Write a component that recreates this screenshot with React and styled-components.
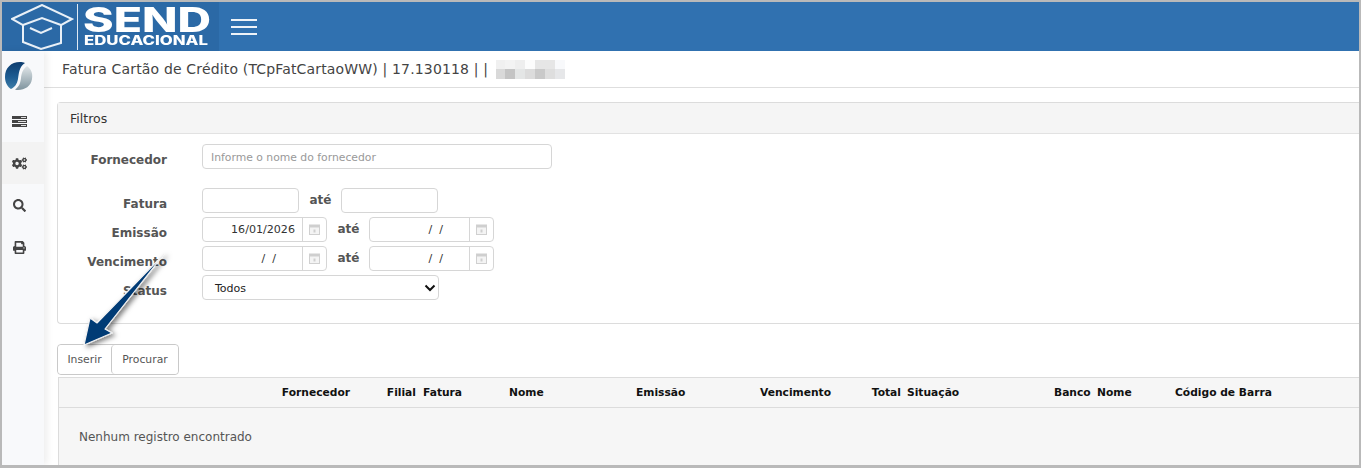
import React from 'react';
import styled, { createGlobalStyle } from 'styled-components';
import { FaCogs, FaSearch, FaPrint } from 'react-icons/fa';

const GlobalStyle = createGlobalStyle`
  html, body {
    margin: 0;
    padding: 0;
    height: 100%;
    overflow: hidden;
    background: #fff;
  }
  body {
    font-family: "DejaVu Sans", Verdana, sans-serif;
    color: #444;
  }
`;

const Page = styled.div`
  position: relative;
  box-sizing: border-box;
  width: 1361px;
  height: 468px;
  border: 2px solid #b9b9b9;
  border-bottom-width: 3px;
  display: flex;
  flex-direction: column;
  overflow: hidden;
`;

const TopBar = styled.header`
  height: 49px;
  flex: none;
  background: #3071b0;
  display: flex;
  align-items: center;
`;

const LogoBox = styled.div`
  width: 217px;
  height: 49px;
  background: #2b69a6;
  display: flex;
  align-items: center;
  padding-left: 9px;
  box-sizing: border-box;
  flex: none;
`;

const LogoDivider = styled.div`
  width: 1px;
  height: 46px;
  background: #dfe9f3;
  margin-right: 6px;
`;

const LogoWords = styled.div`
  display: flex;
  flex-direction: column;
  color: #fff;
  font-family: Inter, "Liberation Sans", sans-serif;
  width: 126px;
`;

const LogoMain = styled.span`
  font-size: 34px;
  line-height: 27px;
  font-weight: 800;
  transform: scaleX(1.365);
  transform-origin: left center;
  white-space: nowrap;
  margin-left: -1px;
`;

const LogoSub = styled.span`
  font-size: 12.5px;
  line-height: 13px;
  font-weight: 800;
  margin-top: 1px;
  transform: scaleX(1.34);
  transform-origin: left center;
  white-space: nowrap;
`;

const Burger = styled.div`
  width: 26px;
  margin-left: 12px;
  display: flex;
  flex-direction: column;
  gap: 5px;

  span {
    display: block;
    height: 2px;
    background: #eef3f8;
  }
`;

const Body = styled.div`
  flex: 1;
  display: flex;
  min-height: 0;
`;

const Sidebar = styled.aside`
  width: 42px;
  flex: none;
  background: #f8f9fb;
  box-shadow: 3px 0 7px rgba(0, 0, 0, 0.07);
  display: flex;
  flex-direction: column;
  z-index: 1;
`;

const SideLogo = styled.div`
  height: 49px;
  display: flex;
  justify-content: center;
  align-items: center;
  padding-right: 8px;
`;

const SideItem = styled.div`
  height: 42px;
  display: flex;
  align-items: center;
  justify-content: center;
  padding-right: 8px;
  color: #444;
  font-size: 13px;
  background: ${(p) => (p.$active ? '#f3f3f3' : 'transparent')};
`;

const Main = styled.main`
  flex: 1;
  min-width: 0;
  display: flex;
  flex-direction: column;
`;

const TitleRow = styled.div`
  height: 37px;
  flex: none;
  box-sizing: border-box;
  border-bottom: 1px solid #dedede;
  padding-left: 18px;
  display: flex;
  align-items: center;
  gap: 8px;
  font-size: 14px;
  letter-spacing: 0.16px;
  color: #444;
  white-space: nowrap;
`;

const Mosaic = styled.svg`
  flex: none;
`;

const Panel = styled.section`
  margin: 14px 0 0 13px;
  height: 222px;
  flex: none;
  box-sizing: border-box;
  border: 1px solid #dcdcdc;
  border-right: none;
  border-radius: 4px 0 0 4px;
`;

const PanelHeader = styled.div`
  height: 31px;
  box-sizing: border-box;
  background: #f5f5f5;
  border-bottom: 1px solid #e2e2e2;
  padding-left: 12px;
  display: flex;
  align-items: center;
  font-size: 12.5px;
  color: #333;
`;

const Fields = styled.div`
  padding-top: 9px;
  display: flex;
  flex-direction: column;
`;

const FieldRow = styled.div`
  display: flex;
  align-items: center;
  height: 25px;
  margin-top: ${(p) => p.$top || 4}px;
`;

const Label = styled.label`
  width: 109px;
  flex: none;
  text-align: right;
  margin-right: 35px;
  font-size: 12px;
  font-weight: 700;
  color: #555;
  padding-top: 6px;
  white-space: nowrap;
`;

const TextInput = styled.div`
  box-sizing: border-box;
  width: ${(p) => p.$w}px;
  height: 25px;
  border: 1px solid #d6d6d6;
  border-radius: 4px;
  background: #fff;
  display: flex;
  align-items: center;
  padding: 1px 0 0 8px;
  font-size: 10.8px;
  color: #999;
`;

const DateBox = styled.div`
  box-sizing: border-box;
  width: 125px;
  height: 25px;
  border: 1px solid #d6d6d6;
  border-radius: 4px;
  display: flex;
  background: #fff;
`;

const DateValue = styled.div`
  flex: 1;
  display: flex;
  align-items: center;
  justify-content: flex-end;
  padding-right: ${(p) => p.$pad}px;
  font-size: 11.1px;
  color: #333;
  white-space: pre;
`;

const DateButton = styled.div`
  width: 23px;
  flex: none;
  border-left: 1px solid #d6d6d6;
  display: flex;
  align-items: center;
  justify-content: center;
`;

const Until = styled.span`
  font-size: 12px;
  font-weight: 700;
  color: #555;
  width: ${(p) => p.$w}px;
  flex: none;
  text-align: center;
  margin-top: -2px;
  padding-left: 1px;
  box-sizing: border-box;
`;

const SelectBox = styled.div`
  box-sizing: border-box;
  width: 237px;
  height: 25px;
  border: 1px solid #d6d6d6;
  border-radius: 4px;
  display: flex;
  align-items: center;
  justify-content: space-between;
  padding: 1px 2px 0 12px;
  font-size: 11px;
  color: #222;
`;

const ButtonGroup = styled.div`
  margin: 20px 0 0 13px;
  display: inline-flex;
  align-self: flex-start;
  height: 31px;
  box-sizing: border-box;
  border: 1px solid #c9c9c9;
  border-radius: 4px;
`;

const GroupButton = styled.button`
  border: none;
  border-left: ${(p) => (p.$first ? 'none' : '1px solid #c9c9c9')};
  background: #fff;
  padding: 0;
  width: ${(p) => p.$w}px;
  font-family: "DejaVu Sans", Verdana, sans-serif;
  font-size: 10.8px;
  color: #555;
  border-radius: 4px;
`;

const Grid = styled.div`
  margin: 2px 0 0 14px;
  flex: 1;
  box-sizing: border-box;
  background: #f6f6f6;
  border: 1px solid #dcdcdc;
  border-right: none;
  border-bottom: none;
`;

const GridHead = styled.div`
  height: 30px;
  box-sizing: border-box;
  border-bottom: 1px solid #dcdcdc;
  display: flex;
  align-items: center;
  font-size: 10.7px;
  font-weight: 700;
  color: #111;
`;

const HeadCell = styled.div`
  flex: none;
  box-sizing: border-box;
  width: ${(p) => p.$w}px;
  padding-left: ${(p) => p.$pad || 0}px;
  text-align: ${(p) => (p.$right ? 'right' : 'left')};
  white-space: nowrap;
`;

const EmptyText = styled.div`
  padding: 22px 0 0 20px;
  font-size: 12px;
  color: #555;
`;

const ArrowLayer = styled.svg`
  position: absolute;
  left: 70px;
  top: 240px;
  z-index: 2;
  overflow: visible;
`;

const CapLogo = () => (
  <svg width="66" height="46" viewBox="0 0 66 46" fill="none" stroke="#e9f0f7" strokeWidth="2" style={{ flex: 'none' }}>
    <path d="M1 15 L31 1 L61 15 L50 21 L50 39 L30 45 L12 38 L12 21 Z" />
    <path d="M12 21 L31 14 L50 21" />
    <path d="M19 24 L30 29 L41 24" />
  </svg>
);

const SwirlLogo = () => (
  <svg width="28" height="28" viewBox="1 1 28 28">
    <defs>
      <linearGradient id="sw-a" x1="0" y1="0" x2="0" y2="1">
        <stop offset="0" stopColor="#0d3c6e" />
        <stop offset="0.55" stopColor="#1d5c92" />
        <stop offset="1" stopColor="#3f7ea8" />
      </linearGradient>
      <linearGradient id="sw-b" x1="0" y1="0" x2="0" y2="1">
        <stop offset="0" stopColor="#dfe5e8" />
        <stop offset="1" stopColor="#7f949e" />
      </linearGradient>
    </defs>
    <path d="M16 1 C7 1 1 7 1 16 C1 22 4 26 7 28 C11 26 13 23 14 18 C15 12 15 6 21 2 C19 1 18 1 16 1 Z" fill="url(#sw-a)" />
    <path d="M23 5 C27 8 29 12 28 18 C27 25 21 29 14 29 C13 29 12 29 11 28.5 C15 26 16.5 22 17 17 C17.5 12 19 8 23 5 Z" fill="url(#sw-b)" />
  </svg>
);

const RowsIcon = () => (
  <svg width="15" height="11" viewBox="0 0 15 11">
    <rect x="0" y="0" width="15" height="3" fill="#444" />
    <rect x="0" y="4" width="15" height="3" fill="#444" />
    <rect x="0" y="8" width="15" height="3" fill="#444" />
    <rect x="9" y="1" width="5" height="1" fill="#ddd" />
    <rect x="6" y="5" width="8" height="1" fill="#ddd" />
    <rect x="9" y="9" width="5" height="1" fill="#ddd" />
  </svg>
);

const CalendarIcon = () => (
  <svg width="11" height="11" viewBox="0 0 11 11">
    <rect x="0.5" y="1" width="10" height="9.5" fill="#f4f4f4" stroke="#d0d0d0" />
    <rect x="0.5" y="1" width="10" height="2.5" fill="#cfcfcf" />
    <rect x="4.5" y="5.5" width="2" height="3" fill="#cfcfcf" />
  </svg>
);

const mosaicCells = [
  [0, 0, 9, '#f0f0f0'], [9, 0, 10, '#f3f3f3'], [19, 0, 10, '#eeeeee'], [29, 0, 10, '#fcfcfc'],
  [39, 0, 10, '#e6e6e6'], [49, 0, 10, '#e6e6e6'], [59, 0, 10, '#f8f9fb'],
  [0, 9, 9, '#d9d9d9'], [9, 9, 10, '#c4c4c4'], [19, 9, 10, '#e4e6e6'], [29, 9, 10, '#dcdcdc'],
  [39, 9, 10, '#c9c9c9'], [49, 9, 10, '#dedede'], [59, 9, 10, '#e6e7e9'],
];

const MosaicBlock = () => (
  <Mosaic width="69" height="19" viewBox="0 0 69 19">
    {mosaicCells.map(([x, y, w, c]) => (
      <rect key={`${x}-${y}`} x={x} y={y} width={w} height={y === 0 ? 9 : 10} fill={c} />
    ))}
  </Mosaic>
);

const DateField = ({ value, pad }) => (
  <DateBox>
    <DateValue $pad={pad}>{value}</DateValue>
    <DateButton>
      <CalendarIcon />
    </DateButton>
  </DateBox>
);

const columns = [
  { label: 'Fornecedor', w: 291, right: true },
  { label: 'Filial', w: 66, right: true },
  { label: 'Fatura', w: 93, pad: 7 },
  { label: 'Nome', w: 127 },
  { label: 'Emissão', w: 124 },
  { label: 'Vencimento', w: 110 },
  { label: 'Total', w: 31, right: true },
  { label: 'Situação', w: 153, pad: 6 },
  { label: 'Banco', w: 43 },
  { label: 'Nome', w: 78 },
  { label: 'Código de Barra', w: 140 },
];

const App = () => (
  <Page>
    <GlobalStyle />
    <TopBar>
      <LogoBox>
        <CapLogo />
        <LogoDivider />
        <LogoWords>
          <LogoMain>SEND</LogoMain>
          <LogoSub>EDUCACIONAL</LogoSub>
        </LogoWords>
      </LogoBox>
      <Burger>
        <span />
        <span />
        <span />
      </Burger>
    </TopBar>
    <Body>
      <Sidebar>
        <SideLogo>
          <SwirlLogo />
        </SideLogo>
        <SideItem><RowsIcon /></SideItem>
        <SideItem $active><FaCogs size={15} /></SideItem>
        <SideItem><FaSearch /></SideItem>
        <SideItem><FaPrint /></SideItem>
      </Sidebar>
      <Main>
        <TitleRow>
          <span>Fatura Cartão de Crédito (TCpFatCartaoWW) | 17.130118 | |</span>
          <MosaicBlock />
        </TitleRow>
        <Panel>
          <PanelHeader>Filtros</PanelHeader>
          <Fields>
            <FieldRow $top={1}>
              <Label>Fornecedor</Label>
              <TextInput $w={350}>Informe o nome do fornecedor</TextInput>
            </FieldRow>
            <FieldRow $top={19}>
              <Label>Fatura</Label>
              <TextInput $w={97} />
              <Until $w={42}>até</Until>
              <TextInput $w={97} />
            </FieldRow>
            <FieldRow>
              <Label>Emissão</Label>
              <DateField value="16/01/2026" pad={7} />
              <Until $w={42}>até</Until>
              <DateField value="/  /" pad={26} />
            </FieldRow>
            <FieldRow>
              <Label>Vencimento</Label>
              <DateField value="/  /" pad={26} />
              <Until $w={42}>até</Until>
              <DateField value="/  /" pad={26} />
            </FieldRow>
            <FieldRow>
              <Label>Status</Label>
              <SelectBox>
                Todos
                <svg width="12" height="8" viewBox="0 0 12 8" fill="none" stroke="#111" strokeWidth="2">
                  <path d="M1.5 1.5 L6 6 L10.5 1.5" />
                </svg>
              </SelectBox>
            </FieldRow>
          </Fields>
        </Panel>
        <ButtonGroup>
          <GroupButton $first $w={53}>Inserir</GroupButton>
          <GroupButton $w={67}>Procurar</GroupButton>
        </ButtonGroup>
        <Grid>
          <GridHead>
            {columns.map((c) => (
              <HeadCell key={c.label + c.w} $w={c.w} $right={c.right} $pad={c.pad}>
                {c.label}
              </HeadCell>
            ))}
          </GridHead>
          <EmptyText>Nenhum registro encontrado</EmptyText>
        </Grid>
      </Main>
    </Body>
    <ArrowLayer width="100" height="110" viewBox="0 0 100 110">
      <defs>
        <filter id="arrow-shadow" x="-30%" y="-30%" width="160%" height="160%">
          <feDropShadow dx="3" dy="2" stdDeviation="2.5" floodColor="#000" floodOpacity="0.5" />
        </filter>
      </defs>
      <path
        d="M92 12 L33 87 L40 91 L12 103 L18 76 L25 81 Z"
        fill="#003a75"
        stroke="#f2f2f2"
        strokeWidth="1.2"
        strokeLinejoin="round"
        filter="url(#arrow-shadow)"
      />
    </ArrowLayer>
  </Page>
);

export default App;
